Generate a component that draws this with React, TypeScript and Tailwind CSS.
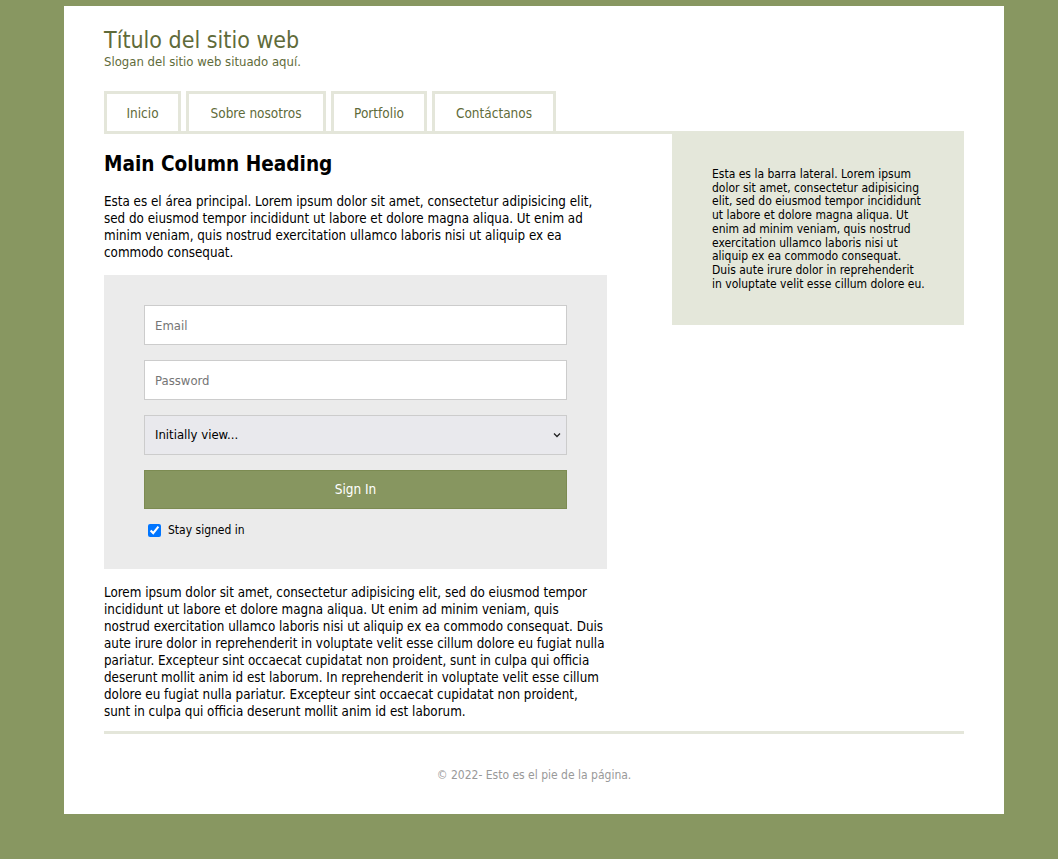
import React from 'react';

const navItems = [
  { label: 'Inicio', w: 'w-[77px]' },
  { label: 'Sobre nosotros', w: 'w-[140px]' },
  { label: 'Portfolio', w: 'w-[96px]' },
  { label: 'Contáctanos', w: 'w-[124px]' },
];

export default function App() {
  return (
    <div className="min-h-screen bg-[#889761] pt-[6px] pb-[45px] font-['DejaVu_Sans_Condensed','Liberation_Sans',sans-serif] text-black">
      <div className="ml-[64px] w-[940px] bg-white px-10 pt-[20px] pb-[32px]">
        {/* Header */}
        <header>
          <h1 className="text-[23px] leading-[28px] text-[#5f6b3a]">Título del sitio web</h1>
          <p className="text-[13px] leading-[16px] text-[#5f6b3a]">Slogan del sitio web situado aquí.</p>
        </header>

        {/* Nav */}
        <nav className="mt-[21px] flex gap-[5px]">
          {navItems.map((item) => (
            <a
              key={item.label}
              href="#"
              className={`${item.w} border-[3px] border-b-0 border-[#e4e6da] pt-[11px] pb-[9px] text-center text-[13.5px] leading-[17px] text-[#5f6b3a]`}
            >
              {item.label}
            </a>
          ))}
        </nav>

        <div className="flex justify-between">
          {/* Main column */}
          <div className="w-[568px] border-t-[3px] border-[#e4e6da]">
            <main className="w-[503px]">
              <h2 className="mt-[17px] text-[20.6px] leading-[26px] font-bold">Main Column Heading</h2>
              <p className="mt-[16px] text-[13.3px] leading-[17px]">
                Esta es el área principal. Lorem ipsum dolor sit amet, consectetur adipisicing elit, sed do eiusmod tempor incididunt ut labore et dolore magna aliqua. Ut enim ad minim veniam, quis nostrud exercitation ullamco laboris nisi ut aliquip ex ea commodo consequat.
              </p>

              <form className="mt-[14px] bg-[#ebebeb] px-10 pt-[30px] pb-[30px]" onSubmit={(e) => e.preventDefault()}>
                <input
                  type="email"
                  placeholder="Email"
                  className="block h-[40px] w-full border border-[#cccccc] bg-white px-[10px] text-[13px] placeholder:text-[#757575]"
                />
                <input
                  type="password"
                  placeholder="Password"
                  className="mt-[15px] block h-[40px] w-full border border-[#cccccc] bg-white px-[10px] text-[13px] placeholder:text-[#757575]"
                />
                <div className="relative mt-[15px]">
                  <select className="block h-[40px] w-full appearance-none border border-[#cccccc] bg-[#e9e9ed] px-[10px] text-[13px]">
                    <option>Initially view...</option>
                  </select>
                  <svg
                    className="pointer-events-none absolute top-[17px] right-[6px]"
                    width="8"
                    height="6"
                    viewBox="0 0 8 6"
                    fill="none"
                  >
                    <path d="M1 1.5 L4 4.5 L7 1.5" stroke="#222" strokeWidth="1.3" />
                  </svg>
                </div>
                <button className="mt-[15px] block h-[39px] w-full border border-[#7c8b52] bg-[#879660] text-[13.5px] text-white">
                  Sign In
                </button>
                <label className="mt-[12px] flex items-center gap-[7px] pl-[4px] text-[12px]">
                  <input type="checkbox" defaultChecked className="m-0 h-[13px] w-[13px]" />
                  Stay signed in
                </label>
              </form>

              <p className="mt-[15px] text-[13.3px] leading-[17px]">
                Lorem ipsum dolor sit amet, consectetur adipisicing elit, sed do eiusmod tempor incididunt ut labore et dolore magna aliqua. Ut enim ad minim veniam, quis nostrud exercitation ullamco laboris nisi ut aliquip ex ea commodo consequat. Duis aute irure dolor in reprehenderit in voluptate velit esse cillum dolore eu fugiat nulla pariatur. Excepteur sint occaecat cupidatat non proident, sunt in culpa qui officia deserunt mollit anim id est laborum. In reprehenderit in voluptate velit esse cillum dolore eu fugiat nulla pariatur. Excepteur sint occaecat cupidatat non proident, sunt in culpa qui officia deserunt mollit anim id est laborum.
              </p>
            </main>
          </div>

          {/* Sidebar */}
          <aside className="w-[292px] self-start bg-[#e4e7da] pl-10 pr-[38.5px] pt-[37px] pb-[34px] text-[12px] leading-[13.7px]">
            Esta es la barra lateral. Lorem ipsum dolor sit amet, consectetur adipisicing elit, sed do eiusmod tempor incididunt ut labore et dolore magna aliqua. Ut enim ad minim veniam, quis nostrud exercitation ullamco laboris nisi ut aliquip ex ea commodo consequat. Duis aute irure dolor in reprehenderit in voluptate velit esse cillum dolore eu.
          </aside>
        </div>

        <hr className="mt-[11px] border-t-[3px] border-[#e4e6da]" />

        <footer className="mt-[34px] text-center text-[12px] leading-[14px] text-[#999999]">
          © 2022- Esto es el pie de la página.
        </footer>
      </div>
    </div>
  );
}
